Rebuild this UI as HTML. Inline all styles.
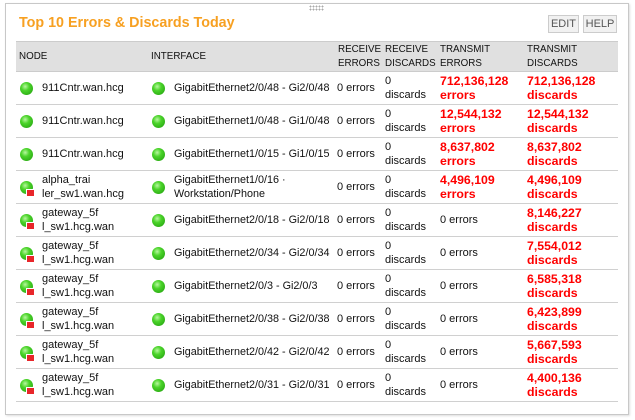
<!DOCTYPE html>
<html><head><style>
body{margin:0;width:635px;height:420px;background:#fff;font-family:"Liberation Sans",Arial,sans-serif;font-size:11px;color:#111;position:relative;overflow:hidden}
.panel{position:absolute;left:5px;top:3px;width:622px;height:410px;border:1px solid #c8c8c8;box-shadow:1px 1px 2px #ddd}
.grip{position:absolute;left:309px;top:5px;width:15px;height:6px;background-image:radial-gradient(circle,#aaa 0.8px,transparent 1px);background-size:3px 3px}
.title{position:absolute;left:19px;top:15px;font-size:14.3px;font-weight:bold;color:#f7a021}
.btn{position:absolute;top:15px;height:16px;border:1px solid #ccc;background:#f1f1f1;color:#555;font-size:11px;line-height:16px;text-align:center}
.hdr{position:absolute;left:16px;top:41px;width:602px;height:31px;background:#e0e0e0;border-top:1px solid #ccc;border-bottom:1px solid #ccc;box-sizing:border-box;font-size:9.8px}
.c{position:absolute;line-height:14px}
.row{position:absolute;left:16px;width:602px;height:33px;border-bottom:1px solid #d0d0d0;box-sizing:border-box}
.row .c.t{font-size:10.8px}
.red{color:#f00;font-weight:bold;font-size:12.3px}
.dot{position:absolute;width:13px;height:13px;border-radius:50%;background:radial-gradient(circle at 40% 35%,#b8f7a0 0,#4bd42a 35%,#1e9a0c 100%)}
.sq{position:absolute;width:7px;height:6px;background:#e8262a;border:1px solid #fff}
</style></head><body>
<div class="panel"></div>
<div class="grip"></div>
<div class="title">Top 10 Errors &amp; Discards Today</div>
<div class="btn" style="left:548px;width:29px">EDIT</div>
<div class="btn" style="left:583px;width:32px">HELP</div>
<div class="hdr">
<div class="c" style="left:3px;top:8px">NODE</div>
<div class="c" style="left:135px;top:8px">INTERFACE</div>
<div class="c" style="left:322px;top:1px">RECEIVE<br>ERRORS</div>
<div class="c" style="left:369px;top:1px">RECEIVE<br>DISCARDS</div>
<div class="c" style="left:424px;top:1px">TRANSMIT<br>ERRORS</div>
<div class="c" style="left:511px;top:1px">TRANSMIT<br>DISCARDS</div>
</div>
<div id="rows"></div>
<script>
var d=[["911Cntr.wan.hcg","GigabitEthernet2/0/48 - Gi2/0/48","712,136,128<br>errors","712,136,128<br>discards",0],
["911Cntr.wan.hcg","GigabitEthernet1/0/48 - Gi1/0/48","12,544,132<br>errors","12,544,132<br>discards",0],
["911Cntr.wan.hcg","GigabitEthernet1/0/15 - Gi1/0/15","8,637,802<br>errors","8,637,802<br>discards",0],
["alpha_trai<br>ler_sw1.wan.hcg","GigabitEthernet1/0/16 ·<br>Workstation/Phone","4,496,109<br>errors","4,496,109<br>discards",1],
["gateway_5f<br>l_sw1.hcg.wan","GigabitEthernet2/0/18 - Gi2/0/18","","8,146,227<br>discards",1],
["gateway_5f<br>l_sw1.hcg.wan","GigabitEthernet2/0/34 - Gi2/0/34","","7,554,012<br>discards",1],
["gateway_5f<br>l_sw1.hcg.wan","GigabitEthernet2/0/3 - Gi2/0/3","","6,585,318<br>discards",1],
["gateway_5f<br>l_sw1.hcg.wan","GigabitEthernet2/0/38 - Gi2/0/38","","6,423,899<br>discards",1],
["gateway_5f<br>l_sw1.hcg.wan","GigabitEthernet2/0/42 - Gi2/0/42","","5,667,593<br>discards",1],
["gateway_5f<br>l_sw1.hcg.wan","GigabitEthernet2/0/31 - Gi2/0/31","","4,400,136<br>discards",1]];
var h="";
d.forEach(function(r,i){
var t=72+i*33;
function v(s){return s.indexOf("<br>")>0?"top:2px":"top:9px";}
h+='<div class="row" style="top:'+t+'px">'+
'<div class="dot" style="left:4px;top:10px"></div>'+(r[4]?'<div class="sq" style="left:10px;top:18px"></div>':'')+
'<div class="c" style="left:26px;'+v(r[0])+'">'+r[0]+'</div>'+
'<div class="dot" style="left:136px;top:10px"></div>'+
'<div class="c t" style="left:158px;'+v(r[1])+'">'+r[1]+'</div>'+
'<div class="c" style="left:321px;top:9px">0 errors</div>'+
'<div class="c" style="left:369px;top:2px">0<br>discards</div>'+
(r[2]?'<div class="c red" style="left:424px;top:2px">'+r[2]+'</div>':'<div class="c" style="left:424px;top:9px">0 errors</div>')+
'<div class="c red" style="left:511px;top:2px">'+r[3]+'</div></div>';
});
document.getElementById("rows").innerHTML=h;
</script>
</body></html>
